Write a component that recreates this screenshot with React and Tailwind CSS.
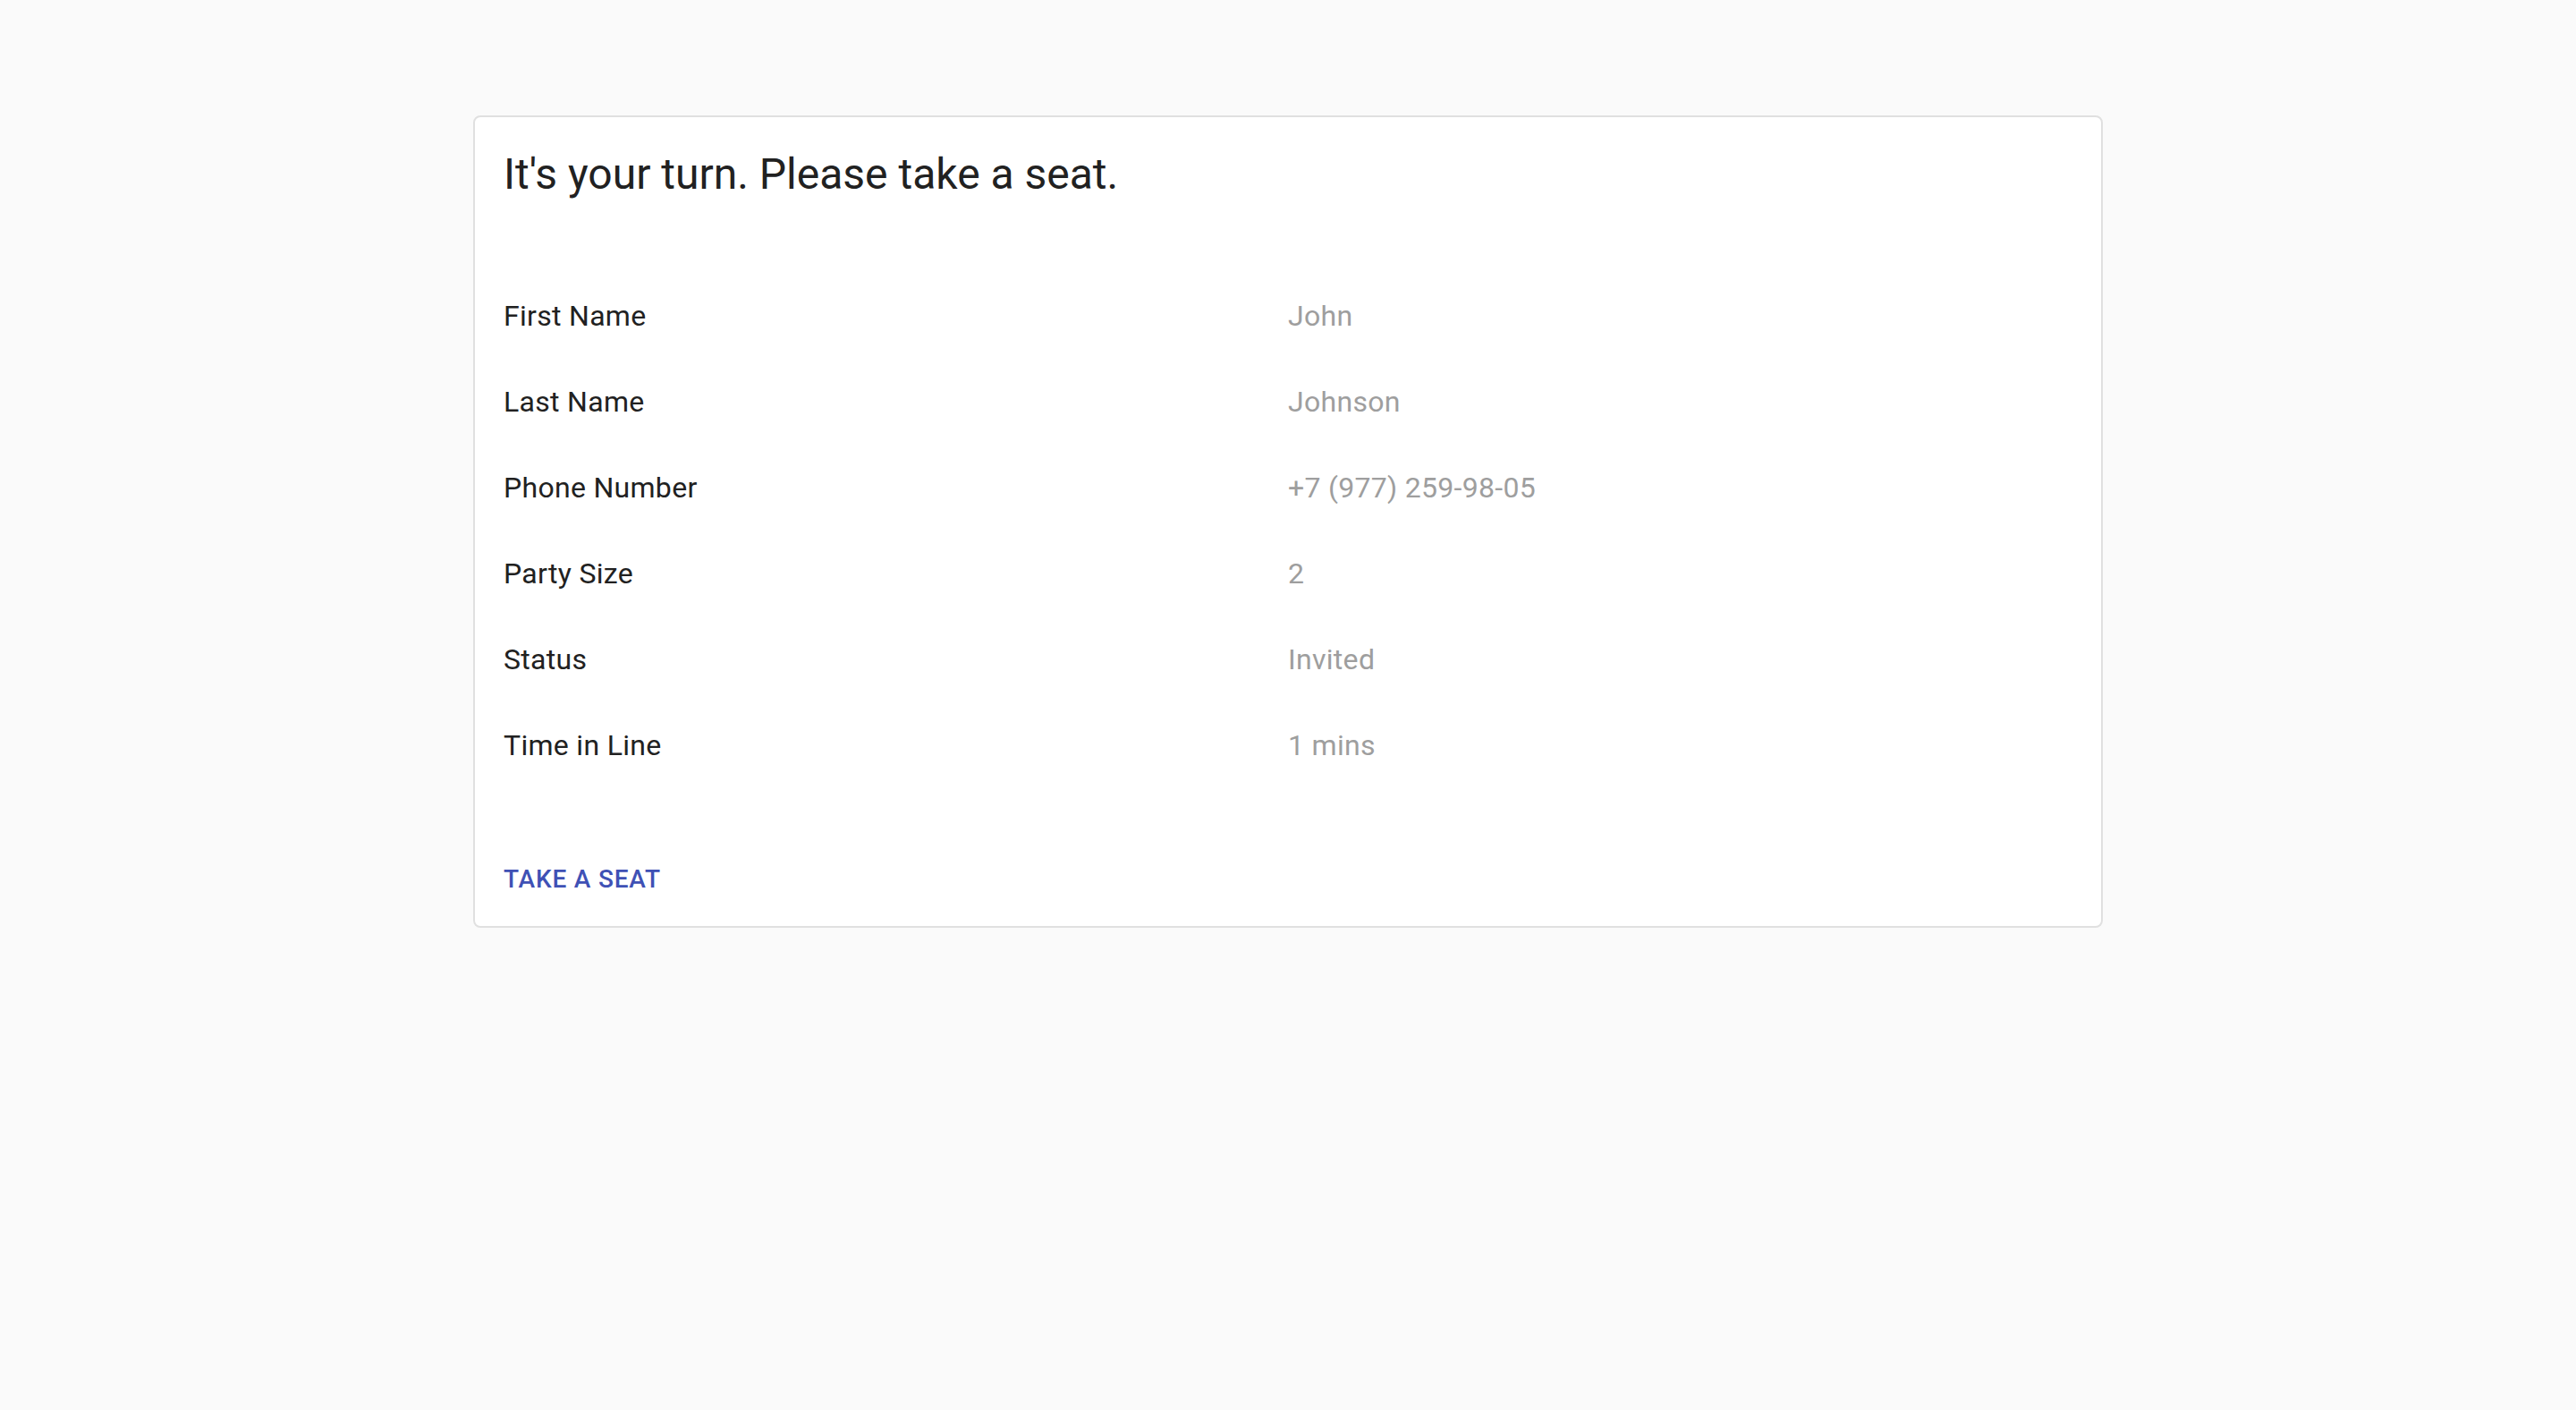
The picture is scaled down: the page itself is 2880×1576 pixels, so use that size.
import React from "react";

const rows = [
  { label: "First Name", value: "John" },
  { label: "Last Name", value: "Johnson" },
  { label: "Phone Number", value: "+7 (977) 259-98-05" },
  { label: "Party Size", value: "2" },
  { label: "Status", value: "Invited" },
  { label: "Time in Line", value: "1 mins" },
];

const App = () => {
  return (
    <div
      className="min-h-screen bg-[#fafafa] pt-[129px]"
      style={{ fontFamily: "Roboto, 'Liberation Sans', sans-serif" }}
    >
      <div className="w-[1822px] mx-auto bg-white border-2 border-[#e0e0e0] rounded-lg">
        {/* Content */}
        <div className="px-8 pt-8 pb-[49px]">
          <h1 className="text-[48px] leading-[64px] font-normal text-[#212121]">
            It's your turn. Please take a seat.
          </h1>

          <div className="mt-[78px]">
            {rows.map((row) => (
              <div key={row.label} className="grid grid-cols-2 h-[96px] items-center">
                <span className="text-[32px] leading-[48px] tracking-[0.3px] text-[#212121]">
                  {row.label}
                </span>
                <span className="text-[32px] leading-[48px] tracking-[0.3px] text-[#9e9e9e]">
                  {row.value}
                </span>
              </div>
            ))}
          </div>
        </div>

        {/* Actions */}
        <div className="p-4">
          <button className="px-4 py-3 text-[28px] leading-[49px] font-medium uppercase tracking-[0.8px] text-[#3f51b5] rounded">
            Take a seat
          </button>
        </div>
      </div>
    </div>
  );
};

export default App;
